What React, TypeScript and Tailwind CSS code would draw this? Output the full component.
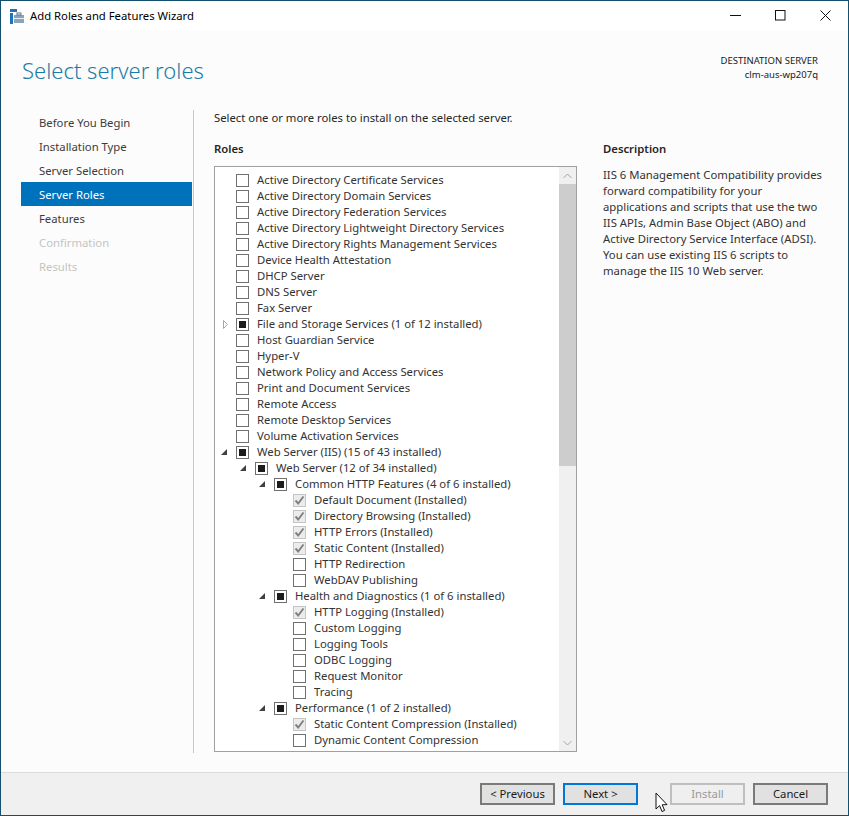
import React from "react";

type Row = { t: string; l?: number; s?: "n" | "m" | "c"; e?: "o" | "c" };

const rows: Row[] = [
  { t: "Active Directory Certificate Services" },
  { t: "Active Directory Domain Services" },
  { t: "Active Directory Federation Services" },
  { t: "Active Directory Lightweight Directory Services" },
  { t: "Active Directory Rights Management Services" },
  { t: "Device Health Attestation" },
  { t: "DHCP Server" },
  { t: "DNS Server" },
  { t: "Fax Server" },
  { t: "File and Storage Services (1 of 12 installed)", s: "m", e: "c" },
  { t: "Host Guardian Service" },
  { t: "Hyper-V" },
  { t: "Network Policy and Access Services" },
  { t: "Print and Document Services" },
  { t: "Remote Access" },
  { t: "Remote Desktop Services" },
  { t: "Volume Activation Services" },
  { t: "Web Server (IIS) (15 of 43 installed)", s: "m", e: "o" },
  { t: "Web Server (12 of 34 installed)", l: 1, s: "m", e: "o" },
  { t: "Common HTTP Features (4 of 6 installed)", l: 2, s: "m", e: "o" },
  { t: "Default Document (Installed)", l: 3, s: "c" },
  { t: "Directory Browsing (Installed)", l: 3, s: "c" },
  { t: "HTTP Errors (Installed)", l: 3, s: "c" },
  { t: "Static Content (Installed)", l: 3, s: "c" },
  { t: "HTTP Redirection", l: 3 },
  { t: "WebDAV Publishing", l: 3 },
  { t: "Health and Diagnostics (1 of 6 installed)", l: 2, s: "m", e: "o" },
  { t: "HTTP Logging (Installed)", l: 3, s: "c" },
  { t: "Custom Logging", l: 3 },
  { t: "Logging Tools", l: 3 },
  { t: "ODBC Logging", l: 3 },
  { t: "Request Monitor", l: 3 },
  { t: "Tracing", l: 3 },
  { t: "Performance (1 of 2 installed)", l: 2, s: "m", e: "o" },
  { t: "Static Content Compression (Installed)", l: 3, s: "c" },
  { t: "Dynamic Content Compression", l: 3 },
];

const indent = ["ml-0", "ml-[19px]", "ml-[38px]", "ml-[57px]"];

function Expander({ e }: { e?: "o" | "c" }) {
  return (
    <span className="w-[17px] h-[13px] flex items-center justify-start shrink-0">
      {e === "c" && (
        <svg width="8" height="9" viewBox="0 0 8 9" className="ml-[3px]">
          <path d="M1.5 0.5 L5.5 4.5 L1.5 8.5 Z" fill="none" stroke="#a6a6a6" />
        </svg>
      )}
      {e === "o" && (
        <svg width="8" height="8" viewBox="0 0 8 8" className="ml-[1px]">
          <path d="M7 1 V7 H1 Z" fill="#404040" />
        </svg>
      )}
    </span>
  );
}

function Check({ s }: { s?: "n" | "m" | "c" }) {
  if (s === "c") {
    return (
      <span className="w-[13px] h-[13px] shrink-0 border border-[#c4c4c4] bg-[#ececec] flex items-center justify-center">
        <svg width="11" height="11" viewBox="0 0 11 11">
          <path d="M1.5 5.5 L4.2 8.5 L9.5 1.5" fill="none" stroke="#7f7f7f" strokeWidth="1.9" />
        </svg>
      </span>
    );
  }
  return (
    <span className="w-[13px] h-[13px] shrink-0 border border-[#707070] bg-white flex items-center justify-center">
      {s === "m" && <span className="w-[7px] h-[7px] bg-[#1c1c1c]" />}
    </span>
  );
}

function Btn({ children, variant }: { children: React.ReactNode; variant?: "focus" | "off" }) {
  const cls =
    variant === "focus"
      ? "border-2 border-[#0078d7] bg-[#e1e1e1] text-[#1a1a1a]"
      : variant === "off"
        ? "border-2 border-[#bfbfbf] bg-[#efefef] text-[#9a9a9a]"
        : "border-2 border-[#7a7a7a] bg-[#e1e1e1] text-[#1a1a1a]";
  return <div className={`w-[75px] h-[22px] flex items-center justify-center ${cls}`}>{children}</div>;
}

const nav = ["Before You Begin", "Installation Type", "Server Selection", "Server Roles", "Features", "Confirmation", "Results"];

export default function App() {
  return (
    <div
      className="w-[849px] h-[816px] overflow-hidden flex flex-col border border-[#14506e] bg-[#fcfcfc] text-[11.3px] text-[#262626] relative"
      style={{ fontFamily: '"Noto Sans", sans-serif' }}
    >
      <div className="h-[30px] bg-white flex items-center shrink-0">
        <svg width="15" height="15" viewBox="0 0 15 15" className="ml-[9px]">
          <rect x="0" y="0" width="7" height="3" fill="#1976bc" />
          <rect x="0" y="4" width="3" height="11" fill="#1976bc" />
          <rect x="4" y="6" width="10" height="8" fill="#8aa4b8" />
          <rect x="7" y="4" width="4" height="2" fill="none" stroke="#5f7686" strokeWidth="1" />
          <rect x="4" y="9" width="10" height="1" fill="#e7eef3" />
        </svg>
        <span className="ml-[5px] text-[#000]">Add Roles and Features Wizard</span>
        <div className="ml-auto flex items-center mr-[17px] mb-[2px] gap-[34px]">
          <svg width="11" height="11" viewBox="0 0 11 11"><path d="M0 5.5 H11" stroke="#111" /></svg>
          <svg width="11" height="11" viewBox="0 0 11 11"><rect x="0.5" y="0.5" width="9.5" height="9.5" fill="none" stroke="#111" /></svg>
          <svg width="11" height="11" viewBox="0 0 11 11"><path d="M0.5 0.5 L10.5 10.5 M10.5 0.5 L0.5 10.5" stroke="#111" /></svg>
        </div>
      </div>

      <div className="flex-1 flex flex-col min-h-0">
        <div className="h-[79px] flex justify-between shrink-0">
          <div className="ml-[21px] mt-[21px] text-[22px] leading-[36px] font-light text-[#1b7ba6]">Select server roles</div>
          <div className="mr-[30px] mt-[23px] text-right text-[9.5px] leading-[14px] text-[#1a1a1a]">
            <div>DESTINATION SERVER</div>
            <div>clm-aus-wp207q</div>
          </div>
        </div>

        <div className="flex h-[643px] shrink-0">
          <div className="w-[171px] ml-[20px] shrink-0">
            {nav.map((n, i) => (
              <div
                key={n}
                className={`h-[24px] pl-[18px] pt-[3px] flex items-center ${i === 3 ? "bg-[#0072bc] text-white" : i > 4 ? "text-[#c4c4c4]" : "text-[#3c3c3c]"}`}
              >
                {n}
              </div>
            ))}
          </div>
          <div className="w-px bg-[#c8c8c8] ml-[1px] shrink-0" />
          <div className="ml-[20px] w-[363px] shrink-0">
            <div className="h-[16px] flex items-center whitespace-nowrap">Select one or more roles to install on the selected server.</div>
            <div className="mt-[15px] h-[16px] flex items-center font-semibold">Roles</div>
            <div className="mt-[9px] h-[586px] border border-[#a0a0a0] bg-white flex overflow-hidden">
              <div className="flex-1 pt-[5px] pl-[4px] overflow-hidden">
                {rows.map((r) => (
                  <div key={r.t} className={`h-[16px] flex items-center ${indent[r.l ?? 0]}`}>
                    <Expander e={r.e} />
                    <Check s={r.s} />
                    <span className="ml-[8px] whitespace-nowrap text-[#333]">{r.t}</span>
                  </div>
                ))}
              </div>
              <div className="w-[17px] bg-[#f0f0f0] flex flex-col shrink-0">
                <div className="h-[17px] flex items-center justify-center">
                  <svg width="9" height="6" viewBox="0 0 9 6"><path d="M0.5 5 L4.5 1 L8.5 5" fill="none" stroke="#a3a3a3" /></svg>
                </div>
                <div className="h-[282px] bg-[#cdcdcd]" />
                <div className="flex-1" />
                <div className="h-[17px] flex items-center justify-center">
                  <svg width="9" height="6" viewBox="0 0 9 6"><path d="M0.5 1 L4.5 5 L8.5 1" fill="none" stroke="#a3a3a3" /></svg>
                </div>
              </div>
            </div>
          </div>
          <div className="ml-[26px] w-[225px] shrink-0">
            <div className="mt-[31px] h-[16px] flex items-center font-semibold">Description</div>
            <div className="mt-[10px] leading-[16px] text-[#333]">
              IIS 6 Management Compatibility provides forward compatibility for your applications and scripts that use the two IIS APIs, Admin Base Object (ABO) and Active Directory Service Interface (ADSI). You can use existing IIS 6 scripts to manage the IIS 10 Web server.
            </div>
          </div>
        </div>

        <div className="flex-1" />
        <div className="h-[43px] shrink-0 bg-[#f0f0f0] border-t border-[#dcdcdc] flex items-center justify-end pr-[20px]">
          <Btn>&lt; Previous</Btn>
          <div className="w-[8px]" />
          <Btn variant="focus">Next &gt;</Btn>
          <div className="w-[32px]" />
          <Btn variant="off">Install</Btn>
          <div className="w-[8px]" />
          <Btn>Cancel</Btn>
        </div>
      </div>

      <div className="absolute left-[-1px] top-[-1px] w-px h-[816px] bg-[linear-gradient(to_bottom,#14587a_170px,#808080_170px,#808080_200px,#333333_200px,#333333_262px,#777777_262px,#777777_330px,#14587a_330px,#14587a_408px,#707070_408px,#707070_705px,#14587a_705px)]" />

      <svg width="14" height="21" viewBox="0 0 14 21" className="absolute left-[654px] top-[791px]">
        <path d="M1 1 V17 L4.6 13.6 L7 19.5 L9.6 18.4 L7.2 12.8 L12 12.6 Z" fill="#fff" stroke="#111" strokeWidth="1" />
      </svg>
    </div>
  );
}
